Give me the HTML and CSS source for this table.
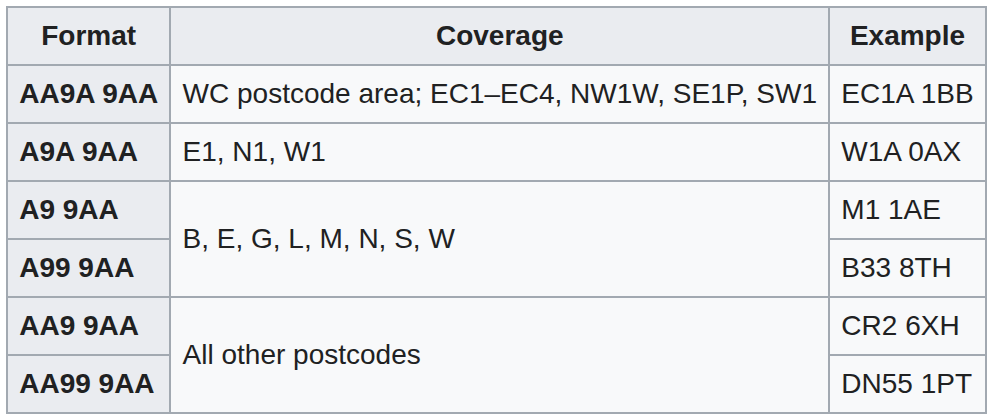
FILE: index.html
```html
<!DOCTYPE html>
<html>
<head>
<meta charset="utf-8">
<link rel="stylesheet" href="styles.css">
</head>
<body>
<table class="wikitable">
  <thead>
    <tr>
      <th class="col-head">Format</th>
      <th class="col-head">Coverage</th>
      <th class="col-head">Example</th>
    </tr>
  </thead>
  <tbody>
    <tr>
      <th class="row-head">AA9A 9AA</th>
      <td>WC postcode area; EC1–EC4, NW1W, SE1P, SW1</td>
      <td>EC1A 1BB</td>
    </tr>
    <tr>
      <th class="row-head">A9A 9AA</th>
      <td>E1, N1, W1</td>
      <td>W1A 0AX</td>
    </tr>
    <tr>
      <th class="row-head">A9 9AA</th>
      <td rowspan="2">B, E, G, L, M, N, S, W</td>
      <td>M1 1AE</td>
    </tr>
    <tr>
      <th class="row-head">A99 9AA</th>
      <td>B33 8TH</td>
    </tr>
    <tr>
      <th class="row-head">AA9 9AA</th>
      <td rowspan="2">All other postcodes</td>
      <td>CR2 6XH</td>
    </tr>
    <tr>
      <th class="row-head">AA99 9AA</th>
      <td>DN55 1PT</td>
    </tr>
  </tbody>
</table>
</body>
</html>
```
FILE: styles.css
```css
html, body {
  margin: 0;
  padding: 0;
  background: #ffffff;
}
body {
  padding: 6px 0 0 6px;
  font-family: "Liberation Sans", Arial, Helvetica, sans-serif;
  font-size: 28px;
  color: #202122;
}
.wikitable {
  border-collapse: collapse;
  background: #f8f9fa;
  color: #202122;
  border: 2px solid #a2a9b1;
  line-height: 1.6;
}
.wikitable th,
.wikitable td {
  border: 2px solid #a2a9b1;
  padding: 5.6px 11.2px;
  vertical-align: middle;
}
.wikitable th {
  background: #eaecf0;
  font-weight: bold;
}
.col-head {
  text-align: center;
}
.row-head {
  text-align: left;
}
.wikitable td {
  text-align: left;
}
```
